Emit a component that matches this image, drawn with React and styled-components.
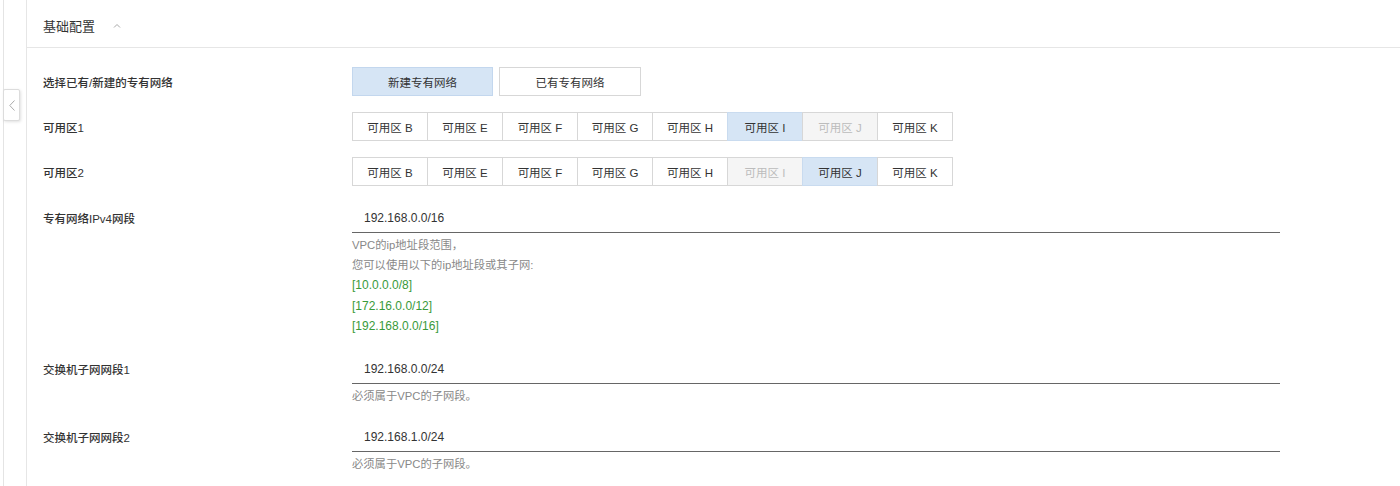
import React from "react";
import styled, { createGlobalStyle } from "styled-components";

const GlobalStyle = createGlobalStyle`
  html, body, #root {
    margin: 0;
    height: 100%;
  }
  body {
    background: #fff;
    font-family: "Liberation Sans", "Noto Sans CJK SC", sans-serif;
    color: #333;
    overflow: hidden;
  }
`;

const Shell = styled.div`
  display: flex;
  height: 100%;
  padding-left: 3px;
`;

const Rail = styled.aside`
  position: relative;
  width: 22px;
  border-left: 1px solid #e4e4e4;
`;

const CollapseTab = styled.button`
  position: absolute;
  top: 89px;
  left: -1px;
  width: 17px;
  height: 32px;
  padding: 0;
  background: #fff;
  border: 1px solid #dcdcdc;
  border-radius: 2px;
  box-shadow: 1px 1px 3px rgba(0, 0, 0, 0.12);
  display: flex;
  align-items: center;
  justify-content: center;
  cursor: pointer;
`;

const Panel = styled.main`
  flex: 1;
  border-left: 1px solid #e6e6e6;
  min-width: 0;
`;

const Header = styled.div`
  height: 48px;
  box-sizing: border-box;
  padding: 3px 0 0 16px;
  display: flex;
  align-items: center;
  gap: 18px;
  border-bottom: 1px solid #e6e6e6;
  font-size: 13px;
  color: #333;
`;

const Form = styled.div`
  padding: 19px 0 0 16px;
  display: flex;
  flex-direction: column;
`;

const Row = styled.div`
  display: flex;
  align-items: flex-start;
  margin-bottom: ${(p) => p.gap ?? 16}px;
`;

const Label = styled.div`
  width: 309px;
  height: ${(p) => p.h}px;
  box-sizing: border-box;
  flex-shrink: 0;
  padding-top: 4px;
  font-size: 11.5px;
  font-weight: 500;
  color: #333;
  line-height: ${(p) => p.h - 4}px;
`;

const Control = styled.div`
  display: flex;
  flex-direction: column;
`;

const ChoiceGroup = styled.div`
  display: flex;
  gap: 6px;
`;

const Choice = styled.button`
  width: ${(p) => (p.wide ? 142 : 141)}px;
  height: 29px;
  padding: 0;
  font-family: inherit;
  font-size: 11.5px;
  color: #333;
  background: ${(p) => (p.active ? "#d6e5f5" : "#fff")};
  border: 1px solid ${(p) => (p.active ? "#c3d7ee" : "#d7d7d7")};
  cursor: pointer;
`;

const Segments = styled.div`
  display: flex;
`;

const Segment = styled.button`
  width: 76px;
  height: 29px;
  margin-left: -1px;
  padding: 0;
  font-family: inherit;
  font-size: 11.5px;
  color: ${(p) => (p.disabled ? "#bcbcbc" : "#333")};
  background: ${(p) =>
    p.active ? "#d6e5f5" : p.disabled ? "#f5f5f5" : "#fff"};
  border: 1px solid ${(p) => (p.active ? "#c9dbef" : "#d7d7d7")};
  cursor: ${(p) => (p.disabled ? "not-allowed" : "pointer")};
  &:first-child {
    margin-left: 0;
  }
`;

const Input = styled.input`
  width: 928px;
  height: 31px;
  box-sizing: border-box;
  padding: 2px 12px 0;
  border: none;
  border-bottom: 1px solid #666;
  outline: none;
  background: transparent;
  font-family: inherit;
  font-size: 12px;
  color: #333;
`;

const Help = styled.div`
  margin-top: 2px;
  font-size: 11.3px;
  line-height: 20px;
  color: #888;
`;

const Ranges = styled.div`
  font-size: 12px;
  line-height: 20.5px;
  color: #399a3a;
`;

const zones = ["B", "E", "F", "G", "H", "I", "J", "K"];

function ZoneSelector({ active, disabled }) {
  return (
    <Segments>
      {zones.map((z) => (
        <Segment key={z} active={z === active} disabled={z === disabled}>
          可用区 {z}
        </Segment>
      ))}
    </Segments>
  );
}

export default function App() {
  return (
    <>
      <GlobalStyle />
      <Shell>
        <Rail>
          <CollapseTab>
            <svg width="6" height="11" viewBox="0 0 6 11">
              <path d="M5.5 0.5 L0.8 5.5 L5.5 10.5" fill="none" stroke="#aaa" strokeWidth="1" />
            </svg>
          </CollapseTab>
        </Rail>
        <Panel>
          <Header>
            基础配置
            <svg width="8" height="5" viewBox="0 0 8 5">
              <path d="M1 4.5 L4 1.5 L7 4.5" fill="none" stroke="#a8a8a8" strokeWidth="1" />
            </svg>
          </Header>
          <Form>
            <Row>
              <Label h={29}>选择已有/新建的专有网络</Label>
              <ChoiceGroup>
                <Choice active>新建专有网络</Choice>
                <Choice wide>已有专有网络</Choice>
              </ChoiceGroup>
            </Row>
            <Row>
              <Label h={29}>可用区1</Label>
              <ZoneSelector active="I" disabled="J" />
            </Row>
            <Row>
              <Label h={29}>可用区2</Label>
              <ZoneSelector active="J" disabled="I" />
            </Row>
            <Row>
              <Label h={31}>专有网络IPv4网段</Label>
              <Control>
                <Input defaultValue="192.168.0.0/16" />
                <Help>
                  <div>VPC的ip地址段范围，</div>
                  <div>您可以使用以下的ip地址段或其子网:</div>
                </Help>
                <Ranges>
                  <div>[10.0.0.0/8]</div>
                  <div>[172.16.0.0/12]</div>
                  <div>[192.168.0.0/16]</div>
                </Ranges>
              </Control>
            </Row>
            <Row gap={15}>
              <Label h={31}>交换机子网网段1</Label>
              <Control>
                <Input defaultValue="192.168.0.0/24" />
                <Help>必须属于VPC的子网段。</Help>
              </Control>
            </Row>
            <Row>
              <Label h={31}>交换机子网网段2</Label>
              <Control>
                <Input defaultValue="192.168.1.0/24" />
                <Help>必须属于VPC的子网段。</Help>
              </Control>
            </Row>
          </Form>
        </Panel>
      </Shell>
    </>
  );
}
